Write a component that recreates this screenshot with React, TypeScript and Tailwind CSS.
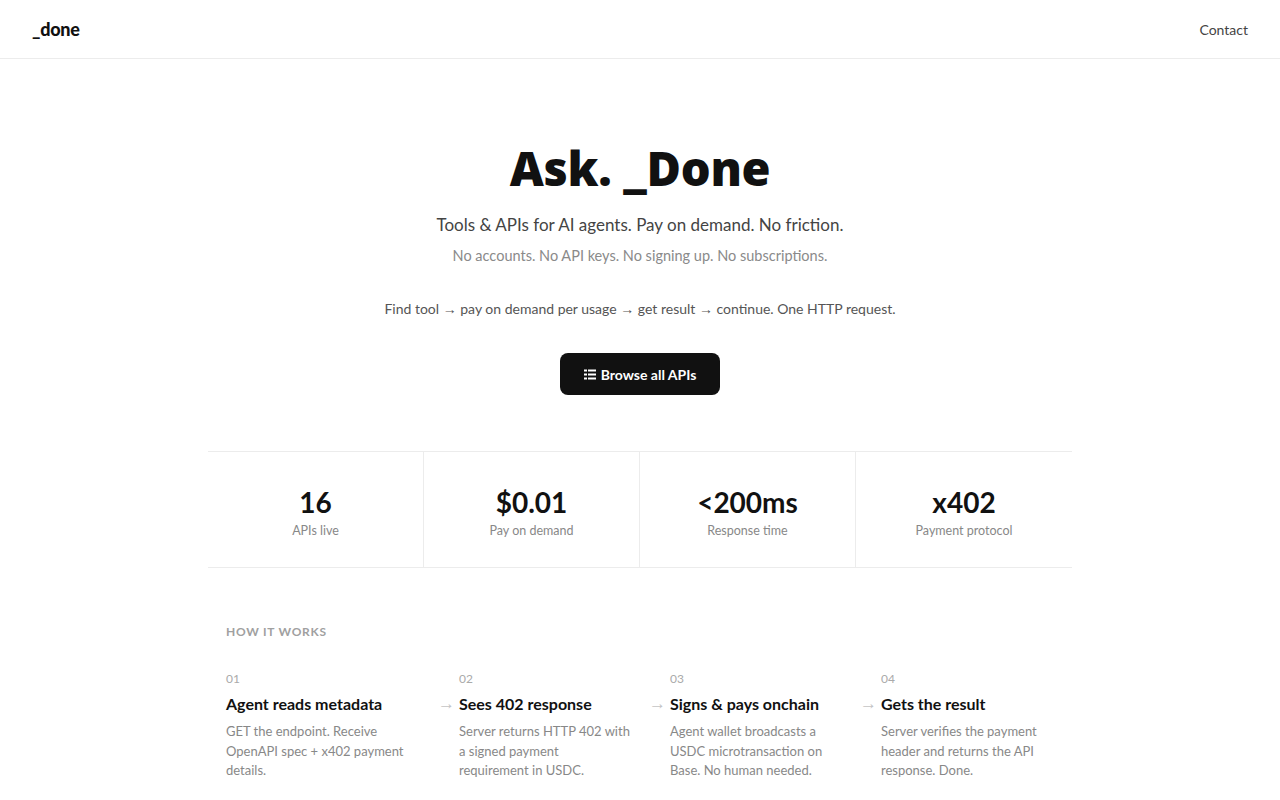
const steps = [
  { n: "01", t: "Agent reads metadata", d: ["GET the endpoint. Receive", "OpenAPI spec + x402 payment", "details."], w: "w-[212px] shrink-0" },
  { n: "02", t: "Sees 402 response", d: ["Server returns HTTP 402 with", "a signed payment", "requirement in USDC."], w: "w-[211px] shrink-0" },
  { n: "03", t: "Signs & pays onchain", d: ["Agent wallet broadcasts a", "USDC microtransaction on", "Base. No human needed."], w: "w-[211px] shrink-0" },
  { n: "04", t: "Gets the result", d: ["Server verifies the payment", "header and returns the API", "response. Done."], w: "flex-1 min-w-0" },
];

const stats = [
  { v: "16", l: "APIs live" },
  { v: "$0.01", l: "Pay on demand" },
  { v: "<200ms", l: "Response time" },
  { v: "x402", l: "Payment protocol" },
];

function ListIcon() {
  return (
    <svg width="12" height="11" viewBox="0 0 12 11" className="shrink-0">
      <rect x="0" y="0.5" width="3" height="2" fill="white" />
      <rect x="4" y="0.5" width="8" height="2" fill="white" />
      <rect x="0" y="4.5" width="3" height="2" fill="white" />
      <rect x="4" y="4.5" width="8" height="2" fill="white" />
      <rect x="0" y="8.5" width="3" height="2" fill="white" />
      <rect x="4" y="8.5" width="8" height="2" fill="white" />
    </svg>
  );
}

export default function App() {
  return (
    <div className="min-h-screen bg-white text-[#111] font-['Lato',sans-serif]">
      <header className="h-[59px] border-b border-[#ececec] flex items-center justify-between px-8">
        <div className="text-[18px] font-black tracking-[-0.3px] text-[#111]">_done</div>
        <div className="text-[14px] text-[#444]">Contact</div>
      </header>

      <section className="flex flex-col items-center pt-[86px]">
        <h1 className="font-['Noto_Sans',sans-serif] font-black text-[47px] leading-none tracking-[-0.3px] text-[#111]">Ask. _Done</h1>
        <p className="mt-[21px] text-[17px] text-[#444] leading-6">Tools &amp; APIs for AI agents. Pay on demand. No friction.</p>
        <p className="mt-[7px] text-[14.5px] text-[#8a8a8a] leading-6">No accounts. No API keys. No signing up. No subscriptions.</p>
        <p className="mt-[29px] text-[14px] text-[#555] leading-6">
          Find tool <span className="font-['Liberation_Sans',sans-serif]">→</span> pay on demand per usage{" "}
          <span className="font-['Liberation_Sans',sans-serif]">→</span> get result{" "}
          <span className="font-['Liberation_Sans',sans-serif]">→</span> continue. One HTTP request.
        </p>
        <button className="mt-[32px] h-[42px] w-[160px] rounded-lg bg-[#111] text-white text-[14px] font-bold flex items-center justify-center gap-[5px]">
          <ListIcon />
          <span>Browse all APIs</span>
        </button>
      </section>

      <section className="max-w-[864px] mx-auto mt-[56px]">
        <div className="grid grid-cols-4 border-y border-[#ececec]">
          {stats.map((s, i) => (
            <div key={s.l} className={`h-[115px] flex flex-col items-center pt-[34px] ${i < 3 ? "border-r border-[#ececec]" : ""}`}>
              <div className="text-[28px] font-bold leading-8 text-[#111]">{s.v}</div>
              <div className="mt-[3px] text-[12.5px] text-[#888] leading-5">{s.l}</div>
            </div>
          ))}
        </div>

        <div className="px-[18px] pt-[56px]">
          <div className="text-[12px] font-bold tracking-[0.06em] text-[#a0a0a0] leading-4">HOW IT WORKS</div>
          <div className="flex mt-[31px]">
            {steps.map((s, i) => (
              <div key={s.n} className={`flex ${s.w}`}>
                {i > 0 && (
                  <div className="w-[21px] shrink-0 pt-[23px] text-[17px] text-[#c4c4c4] leading-5 font-['Liberation_Sans',sans-serif]">→</div>
                )}
                <div className="min-w-0">
                  <div className="text-[12px] text-[#aaa] leading-4">{s.n}</div>
                  <div className="mt-[7px] text-[16px] font-bold text-[#111] leading-5">{s.t}</div>
                  <div className="mt-[8px] text-[13px] text-[#888] leading-[19.5px] whitespace-nowrap">
                    {s.d.map((line) => (
                      <div key={line}>{line}</div>
                    ))}
                  </div>
                </div>
              </div>
            ))}
          </div>
        </div>
      </section>
    </div>
  );
}
